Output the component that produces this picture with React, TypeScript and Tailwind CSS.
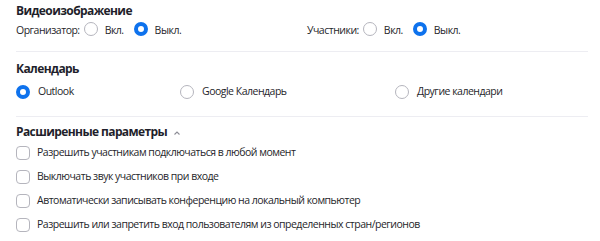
import React from "react";

function Radio({ checked }: { checked?: boolean }) {
  return checked ? (
    <span className="inline-block w-[14px] h-[14px] rounded-full border-[4px] border-[#0e72ed] bg-white shrink-0" />
  ) : (
    <span className="inline-block w-[14px] h-[14px] rounded-full border border-[#b5b5bd] bg-white shrink-0" />
  );
}

function Check({ label }: { label: string }) {
  return (
    <div className="flex items-center h-[24px]">
      <span className="inline-block w-[14px] h-[14px] rounded-[4px] border border-[#b5b5bd] bg-white shrink-0" />
      <span className="ml-[7px]">{label}</span>
    </div>
  );
}

export default function App() {
  return (
    <div
      className="w-[600px] h-[241px] bg-white text-[#1f1f2b] text-[10.5px] tracking-[-0.5px] px-4 overflow-hidden"
      style={{ fontFamily: '"Open Sans", "Noto Sans", sans-serif' }}
    >
      <div className="pt-[3px] h-[19px] leading-[16px] font-bold text-[12px] tracking-[-0.6px]">Видеоизображение</div>
      <div className="mt-[2px] h-[20px] flex items-center">
        <div className="w-[291px] flex items-center">
          <span>Организатор:</span>
          <span className="ml-[4px]"><Radio /></span>
          <span className="ml-[7px]">Вкл.</span>
          <span className="ml-[10px]"><Radio checked /></span>
          <span className="ml-[7px]">Выкл.</span>
        </div>
        <div className="flex items-center">
          <span>Участники:</span>
          <span className="ml-[4px]"><Radio /></span>
          <span className="ml-[7px]">Вкл.</span>
          <span className="ml-[10px]"><Radio checked /></span>
          <span className="ml-[7px]">Выкл.</span>
        </div>
      </div>
      <div className="mt-[10px] h-px bg-[#ededf2] mr-[-4px]" />

      <div className="mt-[9px] h-[16px] leading-[16px] font-bold text-[12px] tracking-[-0.6px]">Календарь</div>
      <div className="mt-[5px] h-[20px] flex items-center">
        <div className="w-[164px] flex items-center">
          <Radio checked />
          <span className="ml-[8px]">Outlook</span>
        </div>
        <div className="w-[215px] flex items-center">
          <Radio />
          <span className="ml-[8px]">Google Календарь</span>
        </div>
        <div className="flex items-center">
          <Radio />
          <span className="ml-[8px]">Другие календари</span>
        </div>
      </div>
      <div className="mt-[14px] h-px bg-[#ededf2] mr-[-4px]" />

      <div className="mt-[7px] h-[16px] leading-[16px] font-bold text-[12px] tracking-[-0.6px] flex items-center">
        <span>Расширенные параметры</span>
        <svg width="8" height="6" viewBox="0 0 8 6" className="ml-[6px] mt-[1px]">
          <path d="M1.5 4.5 L4 2 L6.5 4.5" stroke="#8c8c95" strokeWidth="1.1" fill="none" />
        </svg>
      </div>
      <div className="mt-[1px] flex flex-col">
        <Check label="Разрешить участникам подключаться в любой момент" />
        <Check label="Выключать звук участников при входе" />
        <Check label="Автоматически записывать конференцию на локальный компьютер" />
        <Check label="Разрешить или запретить вход пользователям из определенных стран/регионов" />
      </div>
    </div>
  );
}
